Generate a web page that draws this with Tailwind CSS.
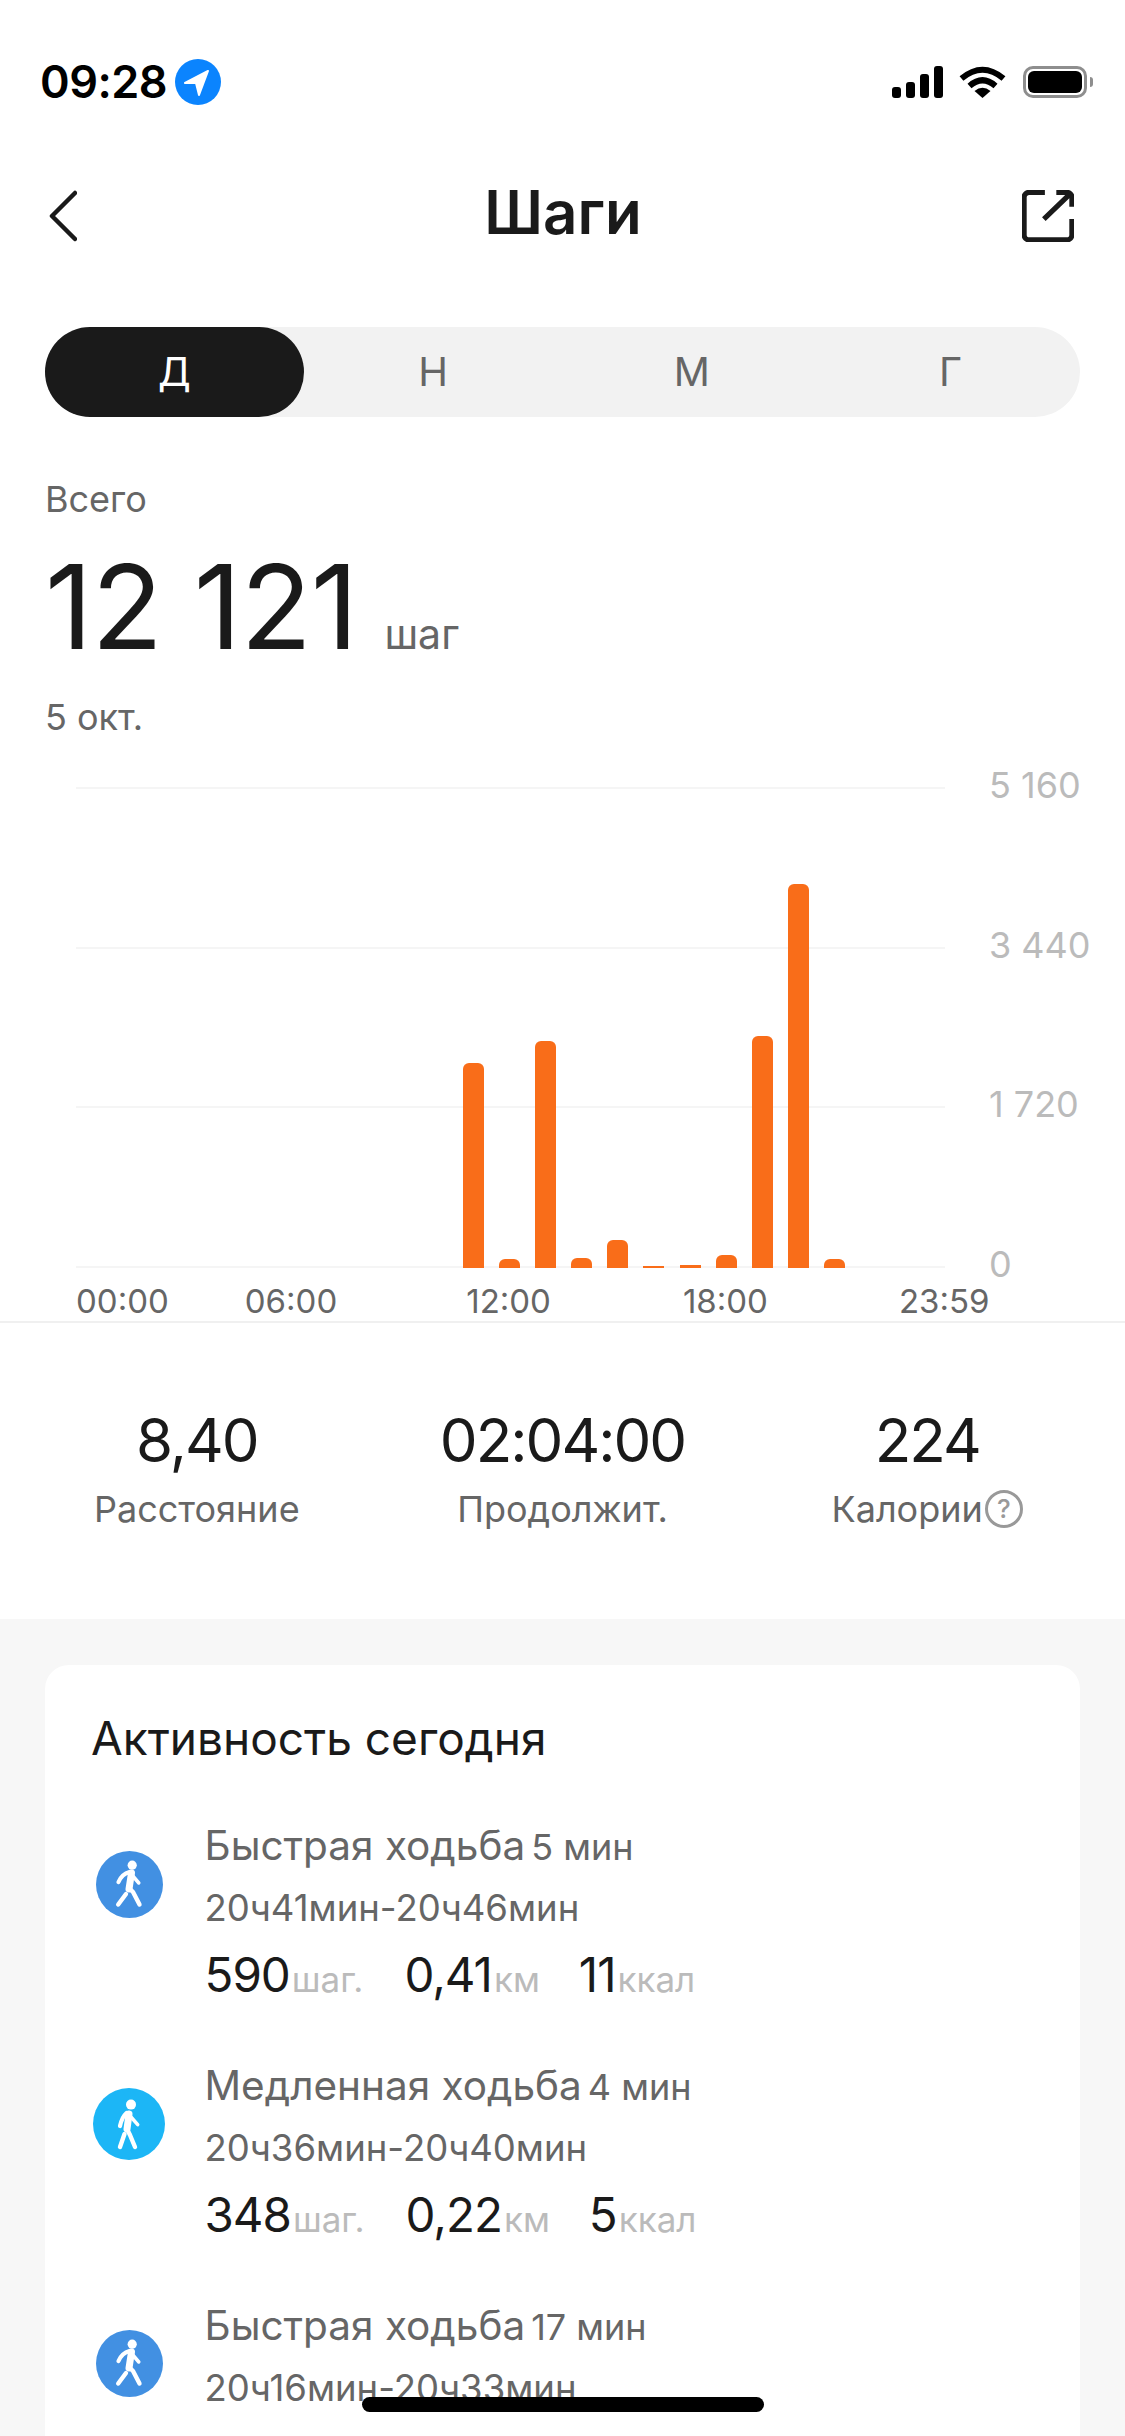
<!DOCTYPE html>
<html lang="ru">
<head>
    <meta charset="UTF-8">
    <meta name="viewport" content="width=device-width, initial-scale=1.0">
    <title>Шаги</title>
    <script src="https://cdn.jsdelivr.net/npm/@tailwindcss/browser@4"></script>
</head>
<body class="bg-white">
    <div class="relative w-[1125px] h-[2436px] overflow-hidden flex flex-col bg-white text-[#1a1a1a] font-['Inter',sans-serif]">

        <!-- status bar -->
        <div class="h-[164px] shrink-0 flex items-center pl-[40px]">
            <span class="text-[45px] leading-[56px] font-semibold tracking-[-0.5px] text-black">09:28</span>
            <svg class="ml-[8px]" width="46" height="46" viewBox="0 0 46 46">
                <circle cx="23" cy="23" r="23" fill="#0b84fe"/>
                <path d="M33 12 L10 24 L21 24 L24 36 Z" fill="#fff" stroke="#fff" stroke-width="2" stroke-linejoin="round"/>
            </svg>
            <div class="ml-auto flex items-center">
                <svg width="52" height="32" viewBox="0 0 52 32" fill="#000">
                    <rect x="0" y="21" width="9" height="11" rx="3"/>
                    <rect x="14" y="16" width="9" height="16" rx="3"/>
                    <rect x="28" y="8" width="9" height="24" rx="3"/>
                    <rect x="42" y="0" width="9" height="32" rx="3"/>
                </svg>
                <svg class="ml-[15px]" width="47" height="32" viewBox="0 0 47 32" fill="none">
                    <path d="M2.5 12.5 Q23.5 -5 44.5 12.5" stroke="#000" stroke-width="6"/>
                    <path d="M10.5 20 Q23.5 8.5 36.5 20" stroke="#000" stroke-width="6"/>
                    <path d="M15.5 25 Q23.5 18.5 31.5 25 L23.5 32 Z" fill="#000"/>
                </svg>
                <div class="ml-[17px] w-[64px] h-[32px] rounded-[10px] border-[3px] border-[#8e8e8e] p-[2px]">
                    <div class="w-full h-full rounded-[6px] bg-black"></div>
                </div>
                <div class="ml-[3px] mr-[32px] w-[3px] h-[10px] rounded-r-[3px] bg-[#8e8e8e]"></div>
            </div>
        </div>

        <!-- header -->
        <div class="h-[104px] shrink-0 flex items-center justify-between pl-[49px] pr-[51px]">
            <div class="w-[52px]">
                <svg width="28" height="52" viewBox="0 0 28 52" fill="none">
                    <path d="M26 3 L3 26 L26 49" stroke="#1a1a1a" stroke-width="4.5" stroke-linecap="round" stroke-linejoin="round"/>
                </svg>
            </div>
            <h1 class="ml-[3px] mb-[8px] text-[60px] leading-[72px] font-semibold">Шаги</h1>
            <svg width="52" height="52" viewBox="0 0 50 50" fill="none">
                <path d="M22 2.2 H7 a5 5 0 0 0 -5 5 V43 a5 5 0 0 0 5 5 H43 a5 5 0 0 0 5 -5 V28 M33 2.2 H43 a5 5 0 0 1 5 5 V16 M21 28 L46 4" stroke="#1a1a1a" stroke-width="5"/>
            </svg>
        </div>

        <!-- period tabs -->
        <div class="mt-[59px] mx-[45px] h-[90px] shrink-0 grid grid-cols-4 rounded-full bg-[#f2f2f2] text-[40px] text-[#666]">
            <div class="flex items-center justify-center rounded-full bg-[#1a1a1a] text-white">Д</div>
            <div class="flex items-center justify-center">Н</div>
            <div class="flex items-center justify-center">М</div>
            <div class="flex items-center justify-center">Г</div>
        </div>

        <!-- total -->
        <div class="mt-[63px] pl-[45px] shrink-0">
            <div class="text-[36px] leading-[38px] h-[40px] text-[#666]">Всего</div>
            <div class="mt-[27px] h-[120px] flex items-baseline">
                <span class="text-[117px] leading-[120px] tracking-[-1px]">12 121</span>
                <span class="ml-[27px] text-[41px] leading-[40px] text-[#666]">шаг</span>
            </div>
            <div class="mt-[30px] text-[36px] leading-[40px] text-[#666]">5 окт.</div>
        </div>

        <!-- chart -->
        <div class="relative mt-[31px] shrink-0 flex flex-col gap-[119.5px]">
            <div class="flex items-center h-[40px] pl-[76px]">
                <div class="w-[869px] h-[2px] bg-[#f5f5f5]"></div>
                <span class="ml-[44px] -translate-y-[3px] text-[36px] leading-[40px] text-[#bbb]">5 160</span>
            </div>
            <div class="flex items-center h-[40px] pl-[76px]">
                <div class="w-[869px] h-[2px] bg-[#f5f5f5]"></div>
                <span class="ml-[44px] -translate-y-[3px] text-[36px] leading-[40px] text-[#bbb]">3 440</span>
            </div>
            <div class="flex items-center h-[40px] pl-[76px]">
                <div class="w-[869px] h-[2px] bg-[#f5f5f5]"></div>
                <span class="ml-[44px] -translate-y-[3px] text-[36px] leading-[40px] text-[#bbb]">1 720</span>
            </div>
            <div class="flex items-center h-[40px] pl-[76px]">
                <div class="w-[869px] h-[2px] bg-[#f5f5f5]"></div>
                <span class="ml-[44px] -translate-y-[3px] text-[36px] leading-[40px] text-[#bbb]">0</span>
            </div>
            <div class="absolute left-[463px] bottom-[19px] flex items-end gap-[15.1px]">
                <div class="w-[21px] h-[205px] rounded-t-[6px] bg-[#f96d19]"></div>
                <div class="w-[21px] h-[9px] rounded-t-[6px] bg-[#f96d19]"></div>
                <div class="w-[21px] h-[227px] rounded-t-[6px] bg-[#f96d19]"></div>
                <div class="w-[21px] h-[10px] rounded-t-[6px] bg-[#f96d19]"></div>
                <div class="w-[21px] h-[28px] rounded-t-[6px] bg-[#f96d19]"></div>
                <div class="w-[21px] h-[2px] bg-[#f96d19]"></div>
                <div class="w-[21px] h-[3px] bg-[#f96d19]"></div>
                <div class="w-[21px] h-[13px] rounded-t-[6px] bg-[#f96d19]"></div>
                <div class="w-[21px] h-[232px] rounded-t-[6px] bg-[#f96d19]"></div>
                <div class="w-[21px] h-[384px] rounded-t-[6px] bg-[#f96d19]"></div>
                <div class="w-[21px] h-[9px] rounded-t-[6px] bg-[#f96d19]"></div>
            </div>
        </div>
        <div class="-mt-[6px] h-[42px] shrink-0 flex pl-[76px] border-b-2 border-[#f0f0f0] text-[33px] leading-[40px] text-[#666]">
            <span>00:00</span>
            <span class="ml-[76px]">06:00</span>
            <span class="ml-[129px]">12:00</span>
            <span class="ml-[132px]">18:00</span>
            <span class="ml-[131px]">23:59</span>
        </div>

        <!-- summary -->
        <div class="h-[296px] shrink-0 pt-[82px] px-[14px] grid grid-cols-3 text-center">
            <div>
                <div class="text-[60px] leading-[70px] tracking-[-2px]">8,40</div>
                <div class="mt-[14px] text-[36px] leading-[40px] text-[#666]">Расстояние</div>
            </div>
            <div>
                <div class="text-[60px] leading-[70px] tracking-[-2px]">02:04:00</div>
                <div class="mt-[14px] text-[36px] leading-[40px] text-[#666]">Продолжит.</div>
            </div>
            <div class="-ml-[2px]">
                <div class="text-[60px] leading-[70px] tracking-[-2px]">224</div>
                <div class="mt-[14px] flex items-center justify-center text-[36px] leading-[40px] text-[#666]">
                    <span>Калории</span>
                    <span class="ml-[2px] shrink-0 flex items-center justify-center w-[38px] h-[38px] rounded-full border-[3px] border-[#999] text-[26px] font-medium leading-none text-[#999]">?</span>
                </div>
            </div>
        </div>

        <!-- today's activity -->
        <div class="flex-1 bg-[#f7f7f7] pt-[46px] px-[45px]">
            <div class="rounded-[24px] bg-white pt-[45px] pl-[46px] h-[900px]">
                <h2 class="text-[46px] leading-[56px] font-normal">Активность сегодня</h2>

                <div class="mt-[51px] flex flex-col gap-[46px]">
                    <div class="flex h-[194px]">
                        <div class="ml-[2px] w-[72px] flex justify-center pt-[34px]">
                            <svg width="67" height="67" viewBox="0 0 67 67" fill="none" stroke="#fff" stroke-linecap="round" stroke-linejoin="round">
                                <circle cx="33.5" cy="33.5" r="33.5" fill="#4290e2" stroke="none"/>
                                <circle cx="36.2" cy="14.2" r="4.6" fill="#fff" stroke="none"/>
                                <path d="M35.5 22 L33 38" stroke-width="7"/>
                                <path d="M33.5 21 Q26 23 22.5 31" stroke-width="4.2"/>
                                <path d="M36 24 L42.8 32" stroke-width="3.5"/>
                                <path d="M33 37 L37 41 L43.5 53.5" stroke-width="4.4"/>
                                <path d="M30 43 L22.2 53.5" stroke-width="4.4"/>
                            </svg>
                        </div>
                        <div class="ml-[39.5px]">
                            <div class="flex items-baseline h-[60px] leading-[58px] text-[#666]">
                                <span class="text-[40.5px]">Быстрая ходьба</span>
                                <span class="ml-[6px] text-[36px]">5 мин</span>
                            </div>
                            <div class="h-[62px] text-[36.5px] leading-[62px] text-[#666]">20ч41мин-20ч46мин</div>
                            <div class="flex items-baseline h-[72px] leading-[72px]">
                                <span class="text-[47.5px] tracking-[-1px]">590</span><span class="ml-[2px] text-[35px] text-[#bbb]">шаг.</span>
                                <span class="ml-[41px] text-[47.5px] tracking-[-1px]">0,41</span><span class="ml-[2px] text-[35px] text-[#bbb]">км</span>
                                <span class="ml-[39px] text-[47.5px] tracking-[-1px]">11</span><span class="ml-[2px] text-[35px] text-[#bbb]">ккал</span>
                            </div>
                        </div>
                    </div>

                    <div class="flex h-[194px]">
                        <div class="ml-[2px] w-[72px] flex justify-center pt-[31px]">
                            <svg width="72" height="72" viewBox="0 0 72 72" fill="none" stroke="#fff" stroke-linecap="round" stroke-linejoin="round">
                                <circle cx="36" cy="36" r="36" fill="#1cb6f6" stroke="none"/>
                                <circle cx="38" cy="16.6" r="5" fill="#fff" stroke="none"/>
                                <path d="M36 26 L34 41" stroke-width="7"/>
                                <path d="M33.5 25 Q29 29 27 38" stroke-width="4.2"/>
                                <path d="M38 29 L44.7 36.6" stroke-width="3.5"/>
                                <path d="M34 41 L37 47 L42 59" stroke-width="4.4"/>
                                <path d="M31.5 46 L27 59" stroke-width="4.4"/>
                            </svg>
                        </div>
                        <div class="ml-[39.5px]">
                            <div class="flex items-baseline h-[60px] leading-[58px] text-[#666]">
                                <span class="text-[40.5px]">Медленная ходьба</span>
                                <span class="ml-[6px] text-[36px]">4 мин</span>
                            </div>
                            <div class="h-[62px] text-[36.5px] leading-[62px] text-[#666]">20ч36мин-20ч40мин</div>
                            <div class="flex items-baseline h-[72px] leading-[72px]">
                                <span class="text-[47.5px] tracking-[-1px]">348</span><span class="ml-[2px] text-[35px] text-[#bbb]">шаг.</span>
                                <span class="ml-[41px] text-[47.5px] tracking-[-1px]">0,22</span><span class="ml-[2px] text-[35px] text-[#bbb]">км</span>
                                <span class="ml-[39px] text-[47.5px] tracking-[-1px]">5</span><span class="ml-[2px] text-[35px] text-[#bbb]">ккал</span>
                            </div>
                        </div>
                    </div>

                    <div class="flex h-[194px]">
                        <div class="ml-[2px] w-[72px] flex justify-center pt-[33px]">
                            <svg width="67" height="67" viewBox="0 0 67 67" fill="none" stroke="#fff" stroke-linecap="round" stroke-linejoin="round">
                                <circle cx="33.5" cy="33.5" r="33.5" fill="#4290e2" stroke="none"/>
                                <circle cx="36.2" cy="14.2" r="4.6" fill="#fff" stroke="none"/>
                                <path d="M35.5 22 L33 38" stroke-width="7"/>
                                <path d="M33.5 21 Q26 23 22.5 31" stroke-width="4.2"/>
                                <path d="M36 24 L42.8 32" stroke-width="3.5"/>
                                <path d="M33 37 L37 41 L43.5 53.5" stroke-width="4.4"/>
                                <path d="M30 43 L22.2 53.5" stroke-width="4.4"/>
                            </svg>
                        </div>
                        <div class="ml-[39.5px]">
                            <div class="flex items-baseline h-[60px] leading-[58px] text-[#666]">
                                <span class="text-[40.5px]">Быстрая ходьба</span>
                                <span class="ml-[6px] text-[36px]">17 мин</span>
                            </div>
                            <div class="h-[61px] text-[36.5px] leading-[62px] text-[#666]">20ч16мин-20ч33мин</div>
                            <div class="flex items-baseline h-[72px] leading-[72px]">
                                <span class="text-[47.5px] tracking-[-1px]">1943</span><span class="ml-[2px] text-[35px] text-[#bbb]">шаг.</span>
                                <span class="ml-[41px] text-[47.5px] tracking-[-1px]">1,41</span><span class="ml-[2px] text-[35px] text-[#bbb]">км</span>
                                <span class="ml-[39px] text-[47.5px] tracking-[-1px]">38</span><span class="ml-[2px] text-[35px] text-[#bbb]">ккал</span>
                            </div>
                        </div>
                    </div>
                </div>
            </div>
        </div>

        <!-- home indicator -->
        <div class="absolute left-[362px] top-[2397px] w-[402px] h-[15px] rounded-full bg-black"></div>
    </div>
</body>
</html>
